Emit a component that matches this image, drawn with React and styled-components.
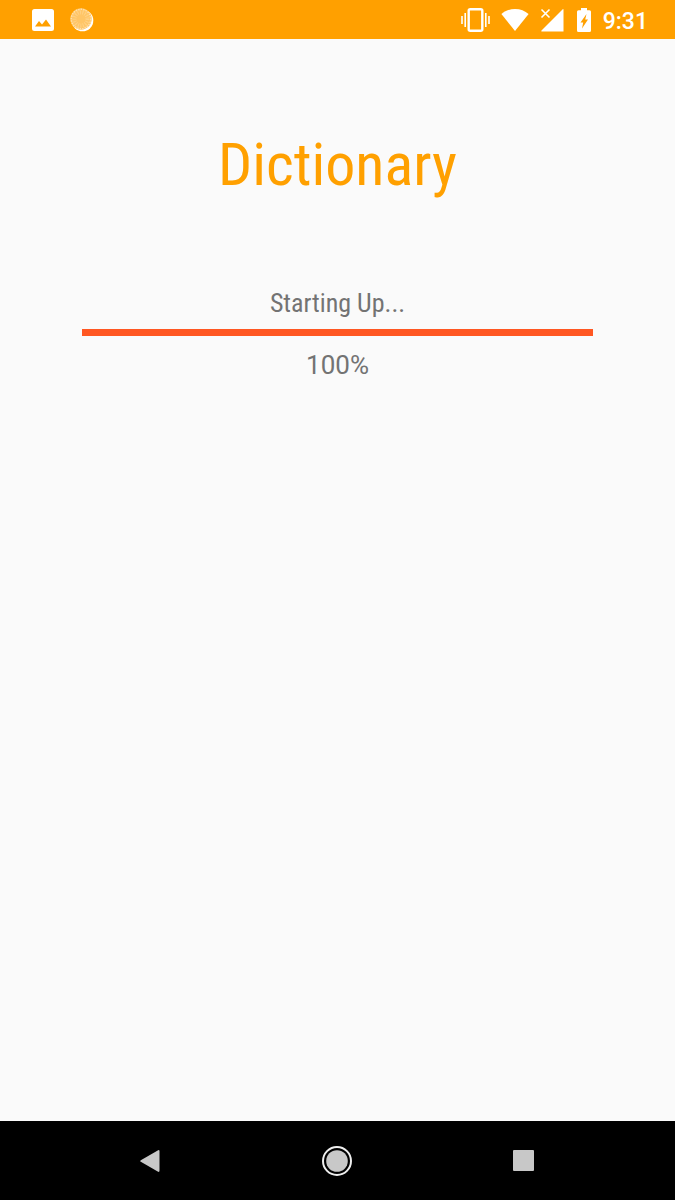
import React from "react";
import styled, { createGlobalStyle } from "styled-components";

const GlobalStyle = createGlobalStyle`
  * { box-sizing: border-box; }
  body { margin: 0; background: #fafafa; font-family: Roboto, "Liberation Sans", sans-serif; }
`;

const Screen = styled.div`
  min-height: 100vh;
  display: flex;
  flex-direction: column;
`;

const StatusBar = styled.header`
  display: flex;
  align-items: center;
  justify-content: space-between;
  height: 39px;
  padding: 0 27px 0 32px;
  background: #ffa000;
  color: #fff;
`;

const StatusGroup = styled.div`
  display: flex;
  align-items: center;
  gap: ${(p) => p.$gap}px;
`;

const Icon = styled.svg`
  display: block;
  flex: none;
`;

const Clock = styled.time`
  font-size: 23px;
  line-height: 28px;
  font-weight: 500;
  padding-top: 4px;
`;

const Content = styled.main`
  flex: 1;
  display: flex;
  flex-direction: column;
  align-items: stretch;
  padding: 90px 82px 40px;
  text-align: center;
`;

const Title = styled.h1`
  margin: 0 0 86px;
  font-family: "Roboto Condensed", Roboto, sans-serif;
  font-size: 60px;
  line-height: 72px;
  font-weight: 400;
  color: #ffa000;
`;

const Message = styled.label`
  font-family: "Roboto Condensed", Roboto, sans-serif;
  font-size: 26px;
  line-height: 32px;
  margin-bottom: 10px;
  color: #737373;
`;

const Progress = styled.progress`
  appearance: none;
  display: block;
  width: 100%;
  height: 7px;
  border: 0;
  background: #ffc9b8;
  &::-webkit-progress-bar { background: #ffc9b8; }
  &::-webkit-progress-value { background: #ff5722; }
`;

const Percent = styled.output`
  margin-top: 13px;
  font-size: 26px;
  line-height: 32px;
  color: #737373;
`;

const NavBar = styled.nav`
  display: flex;
  height: 79px;
  padding: 0 58px 0 57px;
  background: #000;
`;

const NavButton = styled.button`
  flex: 1;
  display: flex;
  align-items: center;
  justify-content: center;
  padding: 0;
  border: 0;
  background: transparent;
  color: #c8c8c8;
`;

function PictureIcon() {
  return (
    <Icon width="22" height="22" viewBox="0 0 22 22" aria-hidden="true">
      <path fill="#fff" fillRule="evenodd" d="M2.5 0h17A2.5 2.5 0 0 1 22 2.5v17a2.5 2.5 0 0 1-2.5 2.5h-17A2.5 2.5 0 0 1 0 19.500v-17A2.5 2.5 0 0 1 2.5 0ZM3 17.500h16l-5-7-4 5-3-3.500Z" />
    </Icon>
  );
}

function MoonIcon() {
  return (
    <Icon width="24" height="24" viewBox="0 0 24 24" aria-hidden="true">
      <circle cx="12.500" cy="12.500" r="10.800" fill="#fff" />
      <circle cx="11" cy="11" r="10.700" fill="#ffc566" />
      <circle cx="11" cy="11" r="9.700" fill="none" stroke="#ffe0ac" strokeWidth="1.500" strokeDasharray="1.500 1" />
      <circle cx="11" cy="11" r="6.500" fill="none" stroke="#ffd184" strokeWidth="4" strokeDasharray="1 1.400" />
    </Icon>
  );
}

function VibrateIcon() {
  return (
    <Icon width="29" height="24" viewBox="0 0 29 24" aria-hidden="true">
      <rect x="7.700" y="1.200" width="13.600" height="21.600" rx="1.500" fill="none" stroke="#fff" strokeWidth="2.400" />
      <path d="M1 8v8M4.200 5v14M24.800 5v14M28 8v8" stroke="#fff" strokeWidth="1.600" />
    </Icon>
  );
}

function WifiIcon() {
  return (
    <Icon width="28" height="22" viewBox="0 0 28 22" aria-hidden="true">
      <path fill="#fff" d="M14 22 .4 4.900C4 2 8.700 0 14 0S24 2 27.600 4.900Z" />
    </Icon>
  );
}

function SignalIcon() {
  return (
    <Icon width="24" height="24" viewBox="0 0 24 24" aria-hidden="true">
      <path fill="#fff" d="M22.500 1.500Q23.500.5 23.500 2V23.500H2Q.5 23.500 1.500 22.500Z" />
      <path d="m1.500 1.500 8 8m0-8-8 8" stroke="#fff" strokeWidth="1.600" />
    </Icon>
  );
}

function BatteryIcon() {
  return (
    <Icon width="17" height="24" viewBox="-2 0 17 24" aria-hidden="true">
      <path fill="#fff" fillRule="evenodd" d="M4 0h6v2.300h2.500A1.500 1.500 0 0 1 14 3.800v18.700a1.500 1.500 0 0 1-1.500 1.500h-11A1.500 1.500 0 0 1 0 22.500V3.800a1.500 1.500 0 0 1 1.500-1.500H4ZM9.500 6 3.500 14.500H6.200L5 20.500 11 11.500H8.200Z" />
    </Icon>
  );
}

export default function App() {
  return (
    <Screen>
      <GlobalStyle />
      <StatusBar>
        <StatusGroup $gap={16}>
          <PictureIcon />
          <MoonIcon />
        </StatusGroup>
        <StatusGroup $gap={11}>
          <VibrateIcon />
          <WifiIcon />
          <SignalIcon />
          <BatteryIcon />
          <Clock>9:31</Clock>
        </StatusGroup>
      </StatusBar>
      <Content>
        <Title>Dictionary</Title>
        <Message htmlFor="startup">Starting Up...</Message>
        <Progress id="startup" value={100} max={100} />
        <Percent htmlFor="startup">100%</Percent>
      </Content>
      <NavBar>
        <NavButton aria-label="Back">
          <Icon width="20" height="24" viewBox="0 0 20 24">
            <path fill="currentColor" d="M.8 11.200 17.700 1.400Q19.500.5 19.500 2.500v19q0 2-1.800 1.100L.8 12.800Q-.4 12 .8 11.200Z" />
          </Icon>
        </NavButton>
        <NavButton aria-label="Home">
          <Icon width="30" height="30" viewBox="0 0 30 30">
            <circle cx="15" cy="15" r="14" fill="none" stroke="#eee" strokeWidth="2" />
            <circle cx="15" cy="15" r="10.800" fill="currentColor" />
          </Icon>
        </NavButton>
        <NavButton aria-label="Recent apps">
          <Icon width="21" height="21" viewBox="0 0 21 21">
            <rect width="21" height="21" rx="1" fill="currentColor" />
          </Icon>
        </NavButton>
      </NavBar>
    </Screen>
  );
}
